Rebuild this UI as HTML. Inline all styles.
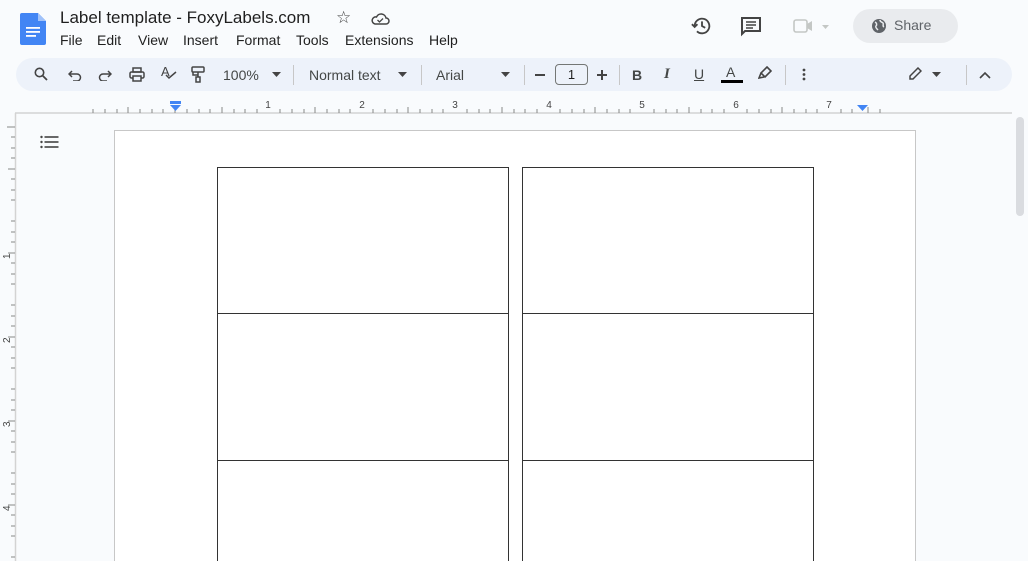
<!DOCTYPE html>
<html><head><meta charset="utf-8"><style>
*{margin:0;padding:0;box-sizing:border-box}
html,body{width:1028px;height:561px;overflow:hidden}
body{background:#f9fbfd;font-family:"Liberation Sans",Arial,sans-serif;color:#1f1f1f;position:relative}
.a{position:absolute}
.title{left:60px;top:8px;font-size:17px;color:#1f1f1f}
.menu{top:32px;font-size:14px;color:#1f1f1f}
.tb{left:16px;top:58px;width:996px;height:33px;background:#edf2fa;border-radius:17px}
.t{font-size:14px;color:#444746;top:67px}
.sep{width:1px;height:20px;background:#c7c7c7;top:65px}
svg{position:absolute}
</style></head><body>
<svg style="left:20px;top:13px" width="26" height="32" viewBox="0 0 26 32"><path d="M2 0h16l8 8v22a2 2 0 0 1-2 2H2a2 2 0 0 1-2-2V2a2 2 0 0 1 2-2z" fill="#4285f4"/><path d="M18 0v8h8z" fill="#a1c2fa"/><rect x="6" y="14" width="14" height="1.8" fill="#fff"/><rect x="6" y="18" width="14" height="1.8" fill="#fff"/><rect x="6" y="22" width="10" height="1.8" fill="#fff"/></svg>
<div class="a title">Label template - FoxyLabels.com</div>
<div class="a" style="left:336px;top:8px;font-size:17px;color:#444">☆</div>
<svg style="left:370px;top:12px" width="20" height="14" viewBox="0 0 20 14"><path d="M5 12h11a3 3 0 0 0 0-6 5 5 0 0 0-9.5-1A3.5 3.5 0 0 0 5 12z" fill="none" stroke="#444" stroke-width="1.5"/><path d="M7.5 8l2 2 3.5-3.5" fill="none" stroke="#444" stroke-width="1.3"/></svg>
<div class="a menu" style="left:60px">File</div>
<div class="a menu" style="left:97px">Edit</div>
<div class="a menu" style="left:138px">View</div>
<div class="a menu" style="left:183px">Insert</div>
<div class="a menu" style="left:236px">Format</div>
<div class="a menu" style="left:296px">Tools</div>
<div class="a menu" style="left:345px">Extensions</div>
<div class="a menu" style="left:429px">Help</div>
<svg style="left:691px;top:15px" width="22" height="22" viewBox="0 0 24 24"><path d="M4 12a8 8 0 1 1 2.5 5.8" fill="none" stroke="#444" stroke-width="2"/><path d="M1 10l3 3 3-3" fill="none" stroke="#444" stroke-width="2"/><path d="M12 7v5l3.5 2" fill="none" stroke="#444" stroke-width="2"/></svg>
<svg style="left:740px;top:16px" width="22" height="22" viewBox="0 0 22 22"><path d="M2 2h18v13H5l-3 3z" fill="none" stroke="#444" stroke-width="2"/><path d="M6 6h10M6 9h10M6 12h7" stroke="#444" stroke-width="1.6"/></svg>
<svg style="left:793px;top:18px" width="40" height="16" viewBox="0 0 40 16"><rect x="1" y="2" width="13" height="12" rx="2" fill="none" stroke="#c4c7c5" stroke-width="1.6"/><path d="M14 6l5-3v10l-5-3" fill="#c4c7c5"/><path d="M29 7h7l-3.5 4z" fill="#c4c7c5"/></svg>
<div class="a" style="left:853px;top:9px;width:105px;height:34px;border-radius:17px;background:#e9ebee"></div>
<svg style="left:871px;top:18px" width="16" height="16" viewBox="0 0 16 16"><circle cx="8" cy="8" r="7" fill="#5f6368"/><path d="M4 4c2 1 2 3 1 4s1 3 2 4M9 2c0 2 2 2 3 3s-1 3 1 4" fill="none" stroke="#e9ebee" stroke-width="1.5"/></svg>
<div class="a" style="left:894px;top:17px;font-size:14px;color:#5f6368">Share</div>
<div class="a tb"></div>
<svg style="left:34px;top:67px" width="14" height="14" viewBox="0 0 14 14"><circle cx="5.5" cy="5.5" r="4.2" fill="none" stroke="#444" stroke-width="1.6"/><path d="M8.5 8.5l4.5 4.5" stroke="#444" stroke-width="1.8"/></svg>
<svg style="left:68px;top:69px" width="14" height="12" viewBox="0 0 14 12"><path d="M4 2L1 5l3 3" fill="none" stroke="#444" stroke-width="1.5"/><path d="M1 5h8a3.5 3.5 0 0 1 0 7H5" fill="none" stroke="#444" stroke-width="1.5"/></svg>
<svg style="left:98px;top:69px" width="14" height="12" viewBox="0 0 14 12"><path d="M10 2l3 3-3 3" fill="none" stroke="#444" stroke-width="1.5"/><path d="M13 5H5a3.5 3.5 0 0 0 0 7h4" fill="none" stroke="#444" stroke-width="1.5"/></svg>
<svg style="left:129px;top:67px" width="16" height="15" viewBox="0 0 16 15"><path d="M4 1h8v4H4z" fill="none" stroke="#444" stroke-width="1.5"/><rect x="1" y="5" width="14" height="6" rx="1.5" fill="none" stroke="#444" stroke-width="1.5"/><path d="M4 9h8v5H4z" fill="#edf2fa" stroke="#444" stroke-width="1.5"/></svg>
<div class="a" style="left:161px;top:64px;font-size:13px;color:#444">A</div>
<svg style="left:165px;top:71px" width="12" height="9" viewBox="0 0 12 9"><path d="M1 4l3 3 7-6" fill="none" stroke="#444" stroke-width="1.5"/></svg>
<svg style="left:191px;top:66px" width="14" height="17" viewBox="0 0 14 17"><rect x="1" y="1" width="12" height="5" rx="1" fill="none" stroke="#444" stroke-width="1.5"/><path d="M7 6v3H2V6M7 9v2" fill="none" stroke="#444" stroke-width="1.5"/><rect x="5" y="11" width="4" height="5" fill="none" stroke="#444" stroke-width="1.5"/></svg>
<div class="a t" style="left:223px">100%</div>
<svg style="left:272px;top:72px" width="9" height="5"><path d="M0 0h9L4.5 5z" fill="#444"/></svg>
<div class="a sep" style="left:293px"></div>
<div class="a t" style="left:309px">Normal text</div>
<svg style="left:398px;top:72px" width="9" height="5"><path d="M0 0h9L4.5 5z" fill="#444"/></svg>
<div class="a sep" style="left:421px"></div>
<div class="a t" style="left:436px">Arial</div>
<svg style="left:501px;top:72px" width="9" height="5"><path d="M0 0h9L4.5 5z" fill="#444"/></svg>
<div class="a sep" style="left:524px"></div>
<div class="a" style="left:535px;top:74px;width:10px;height:1.6px;background:#444"></div>
<div class="a" style="left:555px;top:64px;width:33px;height:21px;border:1px solid #747775;border-radius:4px;font-size:13px;text-align:center;line-height:19px;color:#1f1f1f">1</div>
<div class="a" style="left:597px;top:74px;width:10px;height:1.6px;background:#444"></div>
<div class="a" style="left:601px;top:70px;width:1.6px;height:10px;background:#444"></div>
<div class="a sep" style="left:619px"></div>
<div class="a t" style="left:632px;font-weight:bold;font-size:14px;top:67px">B</div>
<div class="a t" style="left:664px;font-style:italic;font-size:15px;top:66px;font-family:'Liberation Serif',serif;font-weight:bold">I</div>
<div class="a t" style="left:694px;font-size:14px;top:66px;text-decoration:underline">U</div>
<div class="a t" style="left:726px;font-size:14px;top:64px">A</div>
<div class="a" style="left:721px;top:80px;width:22px;height:3px;background:#000"></div>
<svg style="left:758px;top:66px" width="14" height="14" viewBox="0 0 14 14"><path d="M9 1l4 4-6 6-4-4zM3 7l-2 5 5-1" fill="none" stroke="#444" stroke-width="1.6"/></svg>
<div class="a sep" style="left:785px"></div>
<svg style="left:802px;top:68px" width="4" height="13"><circle cx="2" cy="2" r="1.4" fill="#444"/><circle cx="2" cy="6.5" r="1.4" fill="#444"/><circle cx="2" cy="11" r="1.4" fill="#444"/></svg>
<svg style="left:908px;top:67px" width="14" height="14" viewBox="0 0 14 14"><path d="M10 1l3 3-8 8H2V9z" fill="none" stroke="#444" stroke-width="1.5"/></svg>
<svg style="left:932px;top:72px" width="9" height="5"><path d="M0 0h9L4.5 5z" fill="#444"/></svg>
<div class="a sep" style="left:966px"></div>
<svg style="left:979px;top:71px" width="12" height="8"><path d="M1 7l5-5 5 5" fill="none" stroke="#444" stroke-width="1.6"/></svg>
<svg style="left:0;top:95px" width="1028" height="20">
<line x1="15" y1="18" x2="1012" y2="18" stroke="#d3d3d3" stroke-width="1.5"/>
<g stroke="#888" stroke-width="1">
<path d="M93 14v4M105 14v4M117 14v4M128 12v6M140 14v4M152 14v4M163 14v4M175 10v8M187 14v4M199 14v4M210 14v4M222 12v6M234 14v4M245 14v4M257 14v4M280 14v4M292 14v4M304 14v4M315 12v6M327 14v4M339 14v4M350 14v4M373 14v4M385 14v4M397 14v4M408 12v6M420 14v4M432 14v4M443 14v4M467 14v4M479 14v4M490 14v4M502 12v6M514 14v4M525 14v4M537 14v4M560 14v4M572 14v4M584 14v4M595 12v6M607 14v4M619 14v4M630 14v4M654 14v4M666 14v4M677 14v4M689 12v6M701 14v4M712 14v4M724 14v4M747 14v4M759 14v4M771 14v4M782 12v6M794 14v4M806 14v4M817 14v4M841 14v4M852 14v4M868 12v6M880 14v4"/>
</g>
<g font-size="10" fill="#444" text-anchor="middle" font-family="Liberation Sans"><text x="268" y="13">1</text><text x="362" y="13">2</text><text x="455" y="13">3</text><text x="549" y="13">4</text><text x="642" y="13">5</text><text x="736" y="13">6</text><text x="829" y="13">7</text></g>
<rect x="170" y="6" width="11" height="3" fill="#4285f4"/><path d="M170 10h11l-5.5 6z" fill="#4285f4"/>
<path d="M857 10h11l-5.5 6z" fill="#4285f4"/>
</svg>
<svg style="left:0;top:113px" width="20" height="448">
<line x1="15.5" y1="0" x2="15.5" y2="448" stroke="#d3d3d3" stroke-width="1.5"/>
<g stroke="#888"><path d="M7 14h8M11 24h4M11 35h4M11 45h4M8 56h7M11 66h4M11 77h4M11 87h4M11 108h4M11 119h4M11 129h4M8 140h7M11 150h4M11 161h4M11 171h4M11 192h4M11 203h4M11 213h4M8 224h7M11 234h4M11 245h4M11 255h4M11 276h4M11 287h4M11 297h4M8 308h7M11 318h4M11 329h4M11 339h4M11 360h4M11 371h4M11 381h4M8 392h7M11 402h4M11 413h4M11 423h4M11 444h4"/></g>
<g font-size="10" fill="#444" font-family="Liberation Sans"><text transform="translate(10,146) rotate(-90)">1</text><text transform="translate(10,230) rotate(-90)">2</text><text transform="translate(10,314) rotate(-90)">3</text><text transform="translate(10,398) rotate(-90)">4</text></g>
</svg>
<svg style="left:40px;top:135px" width="19" height="14"><g fill="#444"><circle cx="1.5" cy="2" r="1.2"/><circle cx="1.5" cy="7" r="1.2"/><circle cx="1.5" cy="12" r="1.2"/><rect x="4.5" y="1.2" width="14" height="1.6"/><rect x="4.5" y="6.2" width="14" height="1.6"/><rect x="4.5" y="11.2" width="14" height="1.6"/></g></svg>
<div class="a" style="left:114px;top:130px;width:802px;height:431px;background:#fff;border:1px solid #c7c7c7;border-bottom:none"></div>
<div class="a" style="left:217px;top:167px;width:292px;height:394px;border:1px solid #333;border-bottom:none"></div>
<div class="a" style="left:522px;top:167px;width:292px;height:394px;border:1px solid #333;border-bottom:none"></div>
<div class="a" style="left:217px;top:313px;width:292px;height:1px;background:#333"></div>
<div class="a" style="left:522px;top:313px;width:292px;height:1px;background:#333"></div>
<div class="a" style="left:217px;top:460px;width:292px;height:1px;background:#333"></div>
<div class="a" style="left:522px;top:460px;width:292px;height:1px;background:#333"></div>
<div class="a" style="left:1016px;top:117px;width:8px;height:99px;border-radius:4px;background:#dadce0"></div>
</body></html>
